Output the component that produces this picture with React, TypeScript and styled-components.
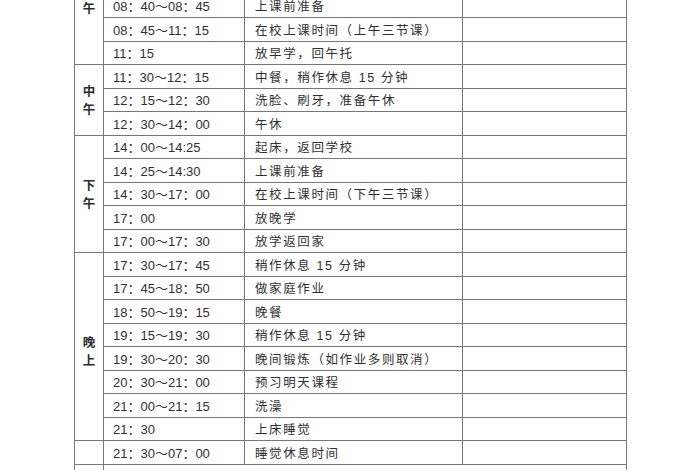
import React from "react";
import styled, {createGlobalStyle} from "styled-components";

const GlobalStyle = createGlobalStyle`
  html, body {
    margin: 0;
    padding: 0;
    background: #ffffff;
  }
  body {
    font-family: "Liberation Sans", "Noto Sans CJK SC", sans-serif;
    color: #333333;
  }
`

const PageViewport = styled.div`
  width: 700px;
  height: 470px;
  overflow: hidden;
  background: #ffffff;
`

// the screenshot is a crop of a longer document: the first rows sit above the window
const ScheduleTable = styled.table`
  margin: -77px 0 0 74px;
  border-collapse: collapse;
  table-layout: fixed;
  width: 552px;
`

const ScheduleRow = styled.tr`
  height: 23.5px;
`

const Cell = styled.td`
  border: 1px solid #777777;
  padding: 0;
  vertical-align: middle;
  white-space: nowrap;
  overflow: hidden;
`

const PeriodCell = styled(Cell)<{ $shift?: number }>`
  text-align: center;
  font-family: "Noto Sans CJK SC", sans-serif;
  font-size: 12.5px;
  font-weight: 700;
  line-height: 18px;
  color: #2e2e2e;
  padding-top: ${({$shift}) => $shift ?? 0}px;
`

const TimeCell = styled(Cell)`
  padding-left: 9px;
  font-size: 13px;
  color: #303030;
`

const ActivityCell = styled(Cell)`
  padding-left: 10px;
  font-size: 12.5px;
  letter-spacing: 1.6px;
  color: #303030;
`

const NoteCell = styled(Cell)``

type ScheduleItem = {
    time: string;
    activity: string;
}

type PeriodGroup = {
    label: string[];
    shift?: number;
    items: ScheduleItem[];
}

const periodGroups: PeriodGroup[] = [
    {
        label: ["上", "午"],
        shift: 9,
        items: [
            {time: "06：40～07：10", activity: "起床、洗漱"},
            {time: "07：10～07：40", activity: "早餐"},
            {time: "07：40～08：40", activity: "上学，早读"},
            {time: "08：40～08：45", activity: "上课前准备"},
            {time: "08：45～11：15", activity: "在校上课时间（上午三节课）"},
            {time: "11：15", activity: "放早学，回午托"},
        ]
    },
    {
        label: ["中", "午"],
        items: [
            {time: "11：30～12：15", activity: "中餐，稍作休息 15 分钟"},
            {time: "12：15～12：30", activity: "洗脸、刷牙，准备午休"},
            {time: "12：30～14：00", activity: "午休"},
        ]
    },
    {
        label: ["下", "午"],
        items: [
            {time: "14：00～14:25", activity: "起床，返回学校"},
            {time: "14：25～14:30", activity: "上课前准备"},
            {time: "14：30～17：00", activity: "在校上课时间（下午三节课）"},
            {time: "17：00", activity: "放晚学"},
            {time: "17：00～17：30", activity: "放学返回家"},
        ]
    },
    {
        label: ["晚", "上"],
        shift: 8,
        items: [
            {time: "17：30～17：45", activity: "稍作休息 15 分钟"},
            {time: "17：45～18：50", activity: "做家庭作业"},
            {time: "18：50～19：15", activity: "晚餐"},
            {time: "19：15～19：30", activity: "稍作休息 15 分钟"},
            {time: "19：30～20：30", activity: "晚间锻炼（如作业多则取消）"},
            {time: "20：30～21：00", activity: "预习明天课程"},
            {time: "21：00～21：15", activity: "洗澡"},
            {time: "21：30", activity: "上床睡觉"},
        ]
    },
    {
        label: [],
        items: [
            {time: "21：30～07：00", activity: "睡觉休息时间"},
        ]
    },
]

const PeriodLabel = ({label}: { label: string[] }) => (
    <>
        {label.map((char, index) => (
            <React.Fragment key={index}>
                {char}
                {index < label.length - 1 && <br/>}
            </React.Fragment>
        ))}
    </>
)

const App = () => {

    return (
        <>
            <GlobalStyle/>
            <PageViewport>
                <ScheduleTable>
                    <colgroup>
                        <col style={{width: 29}}/>
                        <col style={{width: 141}}/>
                        <col style={{width: 218}}/>
                        <col style={{width: 164}}/>
                    </colgroup>
                    <tbody>
                    {
                        periodGroups.map((group, groupIndex) =>
                            group.items.map((item, itemIndex) => (
                                <ScheduleRow key={`${groupIndex}-${itemIndex}`}>
                                    {
                                        itemIndex === 0 &&
                                        <PeriodCell
                                            rowSpan={group.items.length}
                                            $shift={group.shift}
                                        >
                                            <PeriodLabel label={group.label}/>
                                        </PeriodCell>
                                    }
                                    <TimeCell>{item.time}</TimeCell>
                                    <ActivityCell>{item.activity}</ActivityCell>
                                    <NoteCell/>
                                </ScheduleRow>
                            ))
                        )
                    }
                    <ScheduleRow>
                        <PeriodCell/>
                        <ActivityCell colSpan={3}>备注：作息时间可根据实际情况适当调整</ActivityCell>
                    </ScheduleRow>
                    </tbody>
                </ScheduleTable>
            </PageViewport>
        </>
    )
}

export default App
